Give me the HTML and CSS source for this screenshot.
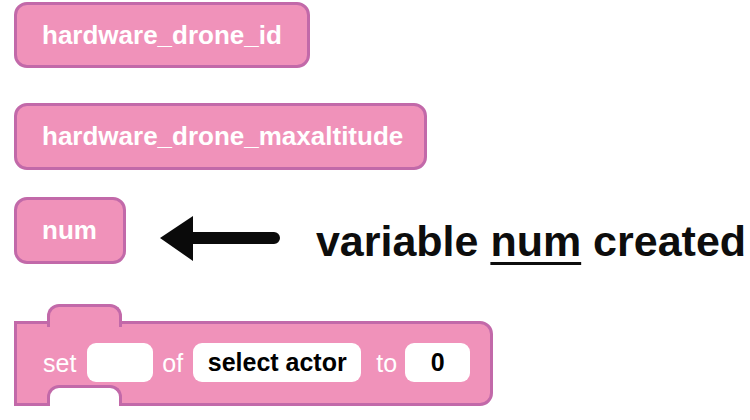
FILE: index.html
```html
<!DOCTYPE html>
<html lang="en">
<head>
    <meta charset="UTF-8">
    <title>Variable blocks</title>
    <link rel="stylesheet" href="styles.css">
</head>
<body>
    <div class="lienzo">
        <div class="bloque">hardware_drone_id</div>
        <div class="bloque segundo">hardware_drone_maxaltitude</div>

        <div class="fila">
            <div class="bloque">num</div>
            <svg class="flecha" width="124" height="50" viewBox="0 0 124 50">
                <path d="M2 24 L35 2 L35 18 L116 18 A6 6 0 0 1 116 30 L35 30 L35 47 Z" fill="#0a0a0a"/>
            </svg>
            <div class="nota">variable <u>num</u> created</div>
        </div>

        <div class="bloque-set">
            <span class="etiqueta">set</span>
            <span class="hueco vacio"></span>
            <span class="etiqueta">of</span>
            <span class="hueco actor">select actor</span>
            <span class="etiqueta">to</span>
            <span class="hueco valor">0</span>
        </div>
    </div>
</body>
</html>
```

FILE: styles.css
```css
body {
    margin: 0;
    background: #ffffff;
    font-family: "Liberation Sans", Arial, sans-serif;
    overflow: hidden;
}

.lienzo {
    width: 736px;
    padding: 2px 0 0 14px;
    display: flex;
    flex-direction: column;
    align-items: flex-start;
}

.bloque {
    box-sizing: border-box;
    height: 66px;
    padding: 0 25px 0 25px;
    display: flex;
    align-items: center;
    flex-shrink: 0;
    background: #f092ba;
    border: 3px solid #c269a9;
    border-radius: 13px;
    color: #ffffff;
    font-size: 26px;
    font-weight: 700;
}

.segundo {
    margin-top: 35px;
    height: 67px;
    padding-right: 21px;
}

.fila {
    margin-top: 27px;
    display: flex;
    align-items: flex-end;
}

.fila .bloque {
    height: 67px;
    padding-right: 26px;
}

.flecha {
    flex-shrink: 0;
    margin-left: 32px;
}

.nota {
    flex-shrink: 0;
    margin-left: 34px;
    white-space: nowrap;
    font-size: 43px;
    font-weight: 700;
    line-height: 1;
    color: #0d0d0d;
    padding-bottom: 1px;
}

.nota u {
    text-decoration-thickness: 3px;
    text-underline-offset: 6px;
}

.bloque-set {
    position: relative;
    box-sizing: border-box;
    margin-top: 57px;
    width: 479px;
    height: 85px;
    padding: 0 0 0 26px;
    display: flex;
    align-items: center;
    background: #f092ba;
    border: 3px solid #c269a9;
    border-radius: 0 13px 13px 0;
}

.bloque-set::before {
    content: "";
    position: absolute;
    left: 30px;
    top: -20px;
    width: 69px;
    height: 20px;
    background: #f092ba;
    border: 3px solid #c269a9;
    border-bottom: none;
    border-radius: 12px 12px 0 0;
}

.bloque-set::after {
    content: "";
    position: absolute;
    left: 30px;
    bottom: -3px;
    width: 69px;
    height: 18px;
    background: #ffffff;
    border: 3px solid #c269a9;
    border-bottom: none;
    border-radius: 12px 12px 0 0;
}

.etiqueta {
    color: #ffffff;
    font-size: 25px;
    margin-top: -1px;
}

.hueco {
    box-sizing: border-box;
    height: 39px;
    margin-top: -3px;
    display: flex;
    align-items: center;
    justify-content: center;
    background: #ffffff;
    border-radius: 9px;
    color: #000000;
    font-size: 25px;
    font-weight: 700;
}

.vacio {
    width: 66px;
    margin: -3px 9px 0 11px;
}

.actor {
    width: 168px;
    margin: -3px 15px 0 10px;
}

.valor {
    width: 65px;
    margin: -3px 0 0 8px;
}
```
